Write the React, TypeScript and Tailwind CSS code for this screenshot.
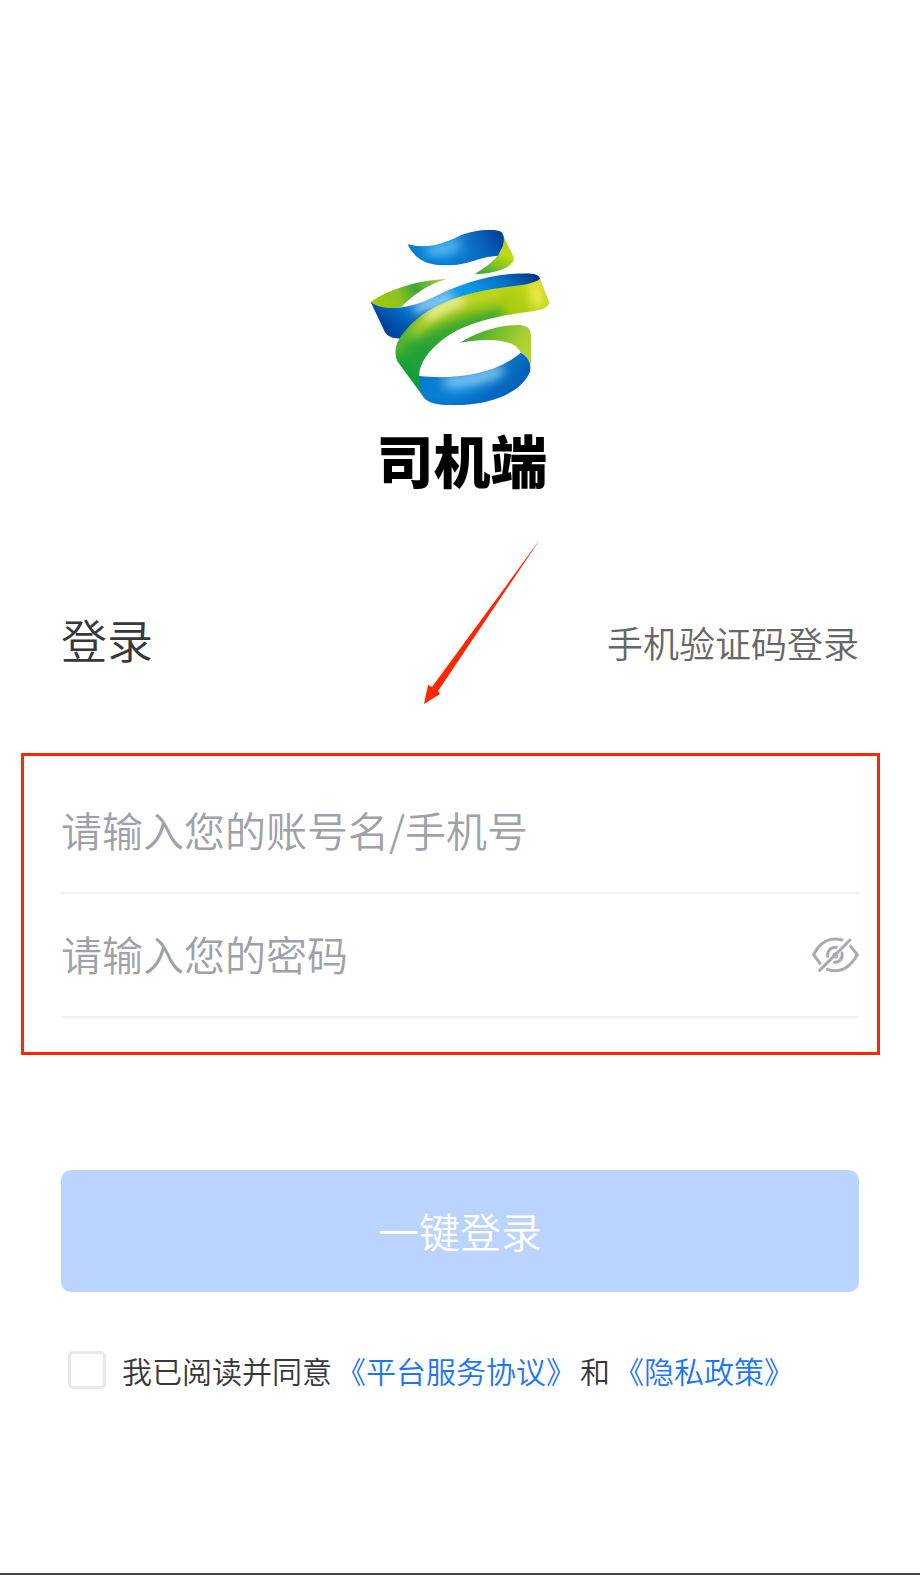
import { useState } from "react";
import type { FormEvent } from "react";

function Logo() {
    return (
        <svg viewBox="0 0 600 600" className="size-[200px]" aria-hidden="true">
            <defs>
                <linearGradient id="topBlue" x1="0" y1="0.4" x2="1" y2="0.2">
                    <stop offset="0" stopColor="#0477cd" />
                    <stop offset="0.35" stopColor="#1492e6" />
                    <stop offset="0.7" stopColor="#0b66bd" />
                    <stop offset="1" stopColor="#003a94" />
                </linearGradient>
                <linearGradient id="topGreen" x1="0.8" y1="0" x2="0.3" y2="1">
                    <stop offset="0" stopColor="#a5c60c" />
                    <stop offset="0.4" stopColor="#c3db15" />
                    <stop offset="1" stopColor="#3fae35" />
                </linearGradient>
                <linearGradient id="leftGreen" x1="0" y1="0.5" x2="1" y2="0.3">
                    <stop offset="0" stopColor="#a3c80f" />
                    <stop offset="0.35" stopColor="#8cc220" />
                    <stop offset="0.6" stopColor="#3fa535" />
                    <stop offset="1" stopColor="#a0cf3a" />
                </linearGradient>
                <linearGradient id="midBlue" x1="0" y1="0.6" x2="1" y2="0.1">
                    <stop offset="0" stopColor="#00419c" />
                    <stop offset="0.15" stopColor="#0667c0" />
                    <stop offset="0.3" stopColor="#1489dd" />
                    <stop offset="0.6" stopColor="#0a9ae8" />
                    <stop offset="0.82" stopColor="#0568bf" />
                    <stop offset="1" stopColor="#00307e" />
                </linearGradient>
                <linearGradient id="midGreen" x1="0.1" y1="1" x2="0.9" y2="0">
                    <stop offset="0" stopColor="#00973d" />
                    <stop offset="0.3" stopColor="#2fa836" />
                    <stop offset="0.5" stopColor="#86c023" />
                    <stop offset="0.75" stopColor="#a8cb12" />
                    <stop offset="1" stopColor="#c8da12" />
                </linearGradient>
                <linearGradient id="lowGreen" x1="0" y1="0.2" x2="1" y2="0.6">
                    <stop offset="0" stopColor="#2da437" />
                    <stop offset="0.5" stopColor="#7cbf2a" />
                    <stop offset="0.8" stopColor="#a9cf35" />
                    <stop offset="1" stopColor="#b5d334" />
                </linearGradient>
                <linearGradient id="lowBlue" x1="0" y1="0.2" x2="1" y2="0.6">
                    <stop offset="0" stopColor="#0575cb" />
                    <stop offset="0.5" stopColor="#0e86da" />
                    <stop offset="1" stopColor="#0454ac" />
                </linearGradient>
                <filter id="soft" filterUnits="userSpaceOnUse" x="0" y="0" width="600" height="600" colorInterpolationFilters="sRGB">
                    <feGaussianBlur stdDeviation="16" />
                </filter>
                <clipPath id="clipTop">
                    <path d="M143 73C190 86 240 77 290 52C330 33 385 24 418 33C434 39 434 60 428 80L414 107C375 109 350 120 320 128C280 139 220 139 190 123C165 110 150 90 143 73Z" />
                </clipPath>
                <clipPath id="clipMidBlue">
                    <path d="M32 246C70 276 150 266 215 235C300 190 400 160 495 160C525 160 540 166 540 178C525 205 400 225 320 245C230 275 165 315 130 355C100 358 85 350 75 337Z" />
                </clipPath>
                <clipPath id="clipMidGreen">
                    <path d="M540 177L567 245C568 268 530 272 500 276C400 290 320 310 260 350C205 388 177 430 177 470C178 490 182 510 195 537L113 425C98 395 108 362 140 328C210 245 330 215 440 201C480 196 520 192 540 177Z" />
                </clipPath>
                <clipPath id="clipLowBlue">
                    <path d="M177 468C270 478 400 470 482 398C505 410 515 430 510 455C480 523 380 560 260 555C218 552 200 545 190 530C180 510 175 490 177 468Z" />
                </clipPath>
            </defs>

            <path fill="url(#topGreen)" d="M428 45C436 65 428 90 412 108C395 130 370 145 344 163C390 160 440 152 459 125Q464 118 460 109Z" />
            <g clipPath="url(#clipTop)">
                <path fill="url(#topBlue)" d="M130 20H440V145H130Z" />
                <path d="M200 95C240 95 265 82 300 68" fill="none" stroke="#7ccbf8" strokeWidth="22" filter="url(#soft)" />
                <path d="M190 142C270 154 340 128 425 112" fill="none" stroke="#0068c2" strokeWidth="26" filter="url(#soft)" />
            </g>

            <path fill="url(#leftGreen)" d="M258 178C190 178 90 205 32 246C45 266 85 270 125 260C160 225 200 195 258 178Z" />
            <g clipPath="url(#clipMidBlue)">
                <path fill="url(#midBlue)" d="M25 150H550V365H25Z" />
                <path d="M165 268C200 258 240 243 280 226" fill="none" stroke="#a6dcfb" strokeWidth="32" filter="url(#soft)" />
                <path d="M75 355L140 350L225 290" fill="none" stroke="#004ca6" strokeWidth="34" filter="url(#soft)" />
            </g>
            <g clipPath="url(#clipMidGreen)">
                <path fill="url(#midGreen)" d="M95 165H575V545H95Z" />
                <path d="M155 345C210 280 300 235 420 214" fill="none" stroke="#cddc2a" strokeWidth="26" filter="url(#soft)" />
                <path d="M200 292C235 264 270 248 310 236" fill="none" stroke="#fffbc0" strokeWidth="26" filter="url(#soft)" />
                <path d="M525 185L535 265" fill="none" stroke="#f6f05a" strokeWidth="32" filter="url(#soft)" />
                <path d="M165 440C190 370 270 315 430 284" fill="none" stroke="#1f9f3a" strokeWidth="32" filter="url(#soft)" />
                <path d="M110 410C112 375 135 345 160 325" fill="none" stroke="#7cc026" strokeWidth="20" filter="url(#soft)" />
            </g>

            <path fill="url(#lowGreen)" d="M300 368C350 335 420 314 480 315C505 317 513 330 513 350V440C510 420 500 405 482 398C468 362 400 350 300 368Z" />
            <g clipPath="url(#clipLowBlue)">
                <path fill="url(#lowBlue)" d="M170 390H520V560H170Z" />
                <path d="M255 486C320 486 380 470 425 448" fill="none" stroke="#93d1f8" strokeWidth="32" filter="url(#soft)" />
                <path d="M200 565C340 565 440 540 510 470" fill="none" stroke="#0066c0" strokeWidth="26" filter="url(#soft)" />
            </g>
        </svg>
    );
}

function EyeOffIcon() {
    return (
        <svg viewBox="0 0 141 108" className="h-9 w-[47px]" fill="none" stroke="#a6abb4" strokeWidth="9" strokeLinecap="round" strokeLinejoin="round" aria-hidden="true">
            <path d="M90 9C52 -2 22 17 5 53L24 79" />
            <path d="M46 97C84 110 114 91 136 53L116 28" />
            <path d="M114 9L23 100" />
            <path d="M73 31C56 31 45 41 47 58" />
            <path d="M90 48C93 64 83 77 67 76" />
            <path d="M73 48Q64 48 63 56" strokeWidth="5" />
            <path d="M77 55Q77 62 69 63" strokeWidth="5" />
        </svg>
    );
}

export default function App() {
    const [account, setAccount] = useState("");
    const [password, setPassword] = useState("");
    const [showPassword, setShowPassword] = useState(false);
    const [agreed, setAgreed] = useState(false);

    const handleSubmit = (e: FormEvent) => {
        e.preventDefault();
    };

    return (
        <div className="flex min-h-screen flex-col bg-white font-['Noto_Sans_CJK_SC',sans-serif] font-[350] text-[#37383b]">
            <header className="flex flex-col items-center gap-2 pt-[220px]">
                <Logo />
                <p className="pl-1 text-[57px] leading-[60px] font-black text-black">司机端</p>
            </header>

            <main className="relative mt-[120px]">
                {/* Arrow pointing at the form */}
                <svg viewBox="0 0 118 168" className="absolute -top-[72px] left-[46%] h-[168px] w-[118px]" aria-hidden="true">
                    <path fill="#ff2600" d="M118 2L15 155L17 158L1 168L5 149L9 151Z" />
                </svg>

                <div className="flex items-baseline justify-between px-[61px]">
                    <h1 className="text-[46px] leading-[60px]">登录</h1>
                    <a href="#sms" className="text-[36px] leading-[60px] text-[#666666]">手机验证码登录</a>
                </div>

                <form onSubmit={handleSubmit}>
                    <div className="mt-[81px] mr-10 ml-[21px] border-3 border-[#ff2600] pt-3.5 pr-[18px] pb-[34px] pl-[37px]">
                        <div className="flex h-[124px] items-center border-b-2 border-[#f1f2f5]">
                            <input
                                type="text"
                                aria-label="账号名/手机号"
                                placeholder="请输入您的账号名/手机号"
                                value={account}
                                onChange={(e) => setAccount(e.target.value)}
                                className="h-16 w-full pb-1 text-[41px] outline-none placeholder:text-[#9da1a9]"
                            />
                        </div>
                        <div className="flex h-[124px] items-center border-b-2 border-[#f1f2f5]">
                            <input
                                type={showPassword ? "text" : "password"}
                                aria-label="密码"
                                placeholder="请输入您的密码"
                                value={password}
                                onChange={(e) => setPassword(e.target.value)}
                                className="h-16 min-w-0 flex-1 pb-1 text-[41px] outline-none placeholder:text-[#9da1a9]"
                            />
                            <button type="button" aria-label="显示密码" onClick={() => setShowPassword(!showPassword)}>
                                <EyeOffIcon />
                            </button>
                        </div>
                    </div>

                    <div className="mt-[115px] px-[61px]">
                        <button type="submit" className="h-[122px] w-full rounded-[10px] bg-[#bad3ff] text-[41px] text-white">
                            一键登录
                        </button>
                    </div>

                    <div className="mt-[54px] flex items-center gap-1 pl-[68px] text-[30px] leading-12">
                        <input
                            id="agree"
                            type="checkbox"
                            checked={agreed}
                            onChange={(e) => setAgreed(e.target.checked)}
                            className="mr-3 size-[38px] appearance-none rounded-[5px] border-3 border-[#e5e8ed] checked:bg-[#1c74ff]"
                        />
                        <label htmlFor="agree">我已阅读并同意</label>
                        <a href="#service" className="text-[#1c74ff]">《平台服务协议》</a>
                        <span>和</span>
                        <a href="#privacy" className="text-[#1c74ff]">《隐私政策》</a>
                    </div>
                </form>
            </main>

            <div className="mt-auto h-0.5 bg-[#464543]" />
        </div>
    );
}
